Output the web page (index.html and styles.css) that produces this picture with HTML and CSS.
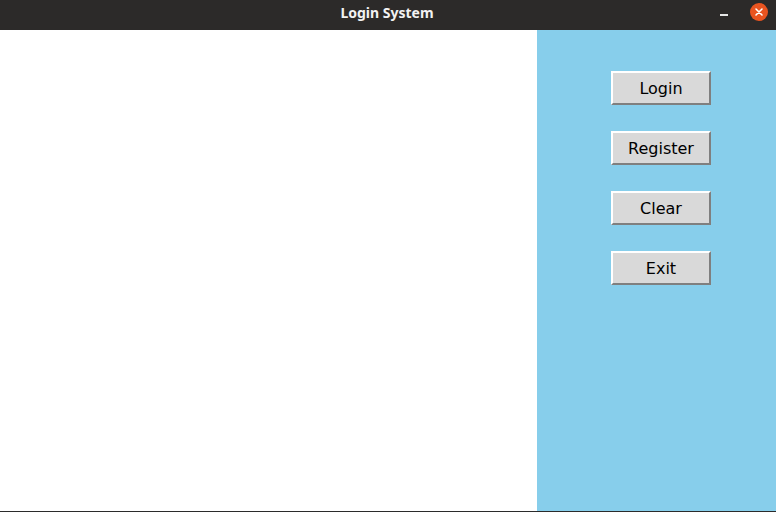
FILE: index.html
```html
<!DOCTYPE html>
<html>
<head>
<meta charset="utf-8">
<link rel="stylesheet" href="styles.css">
</head>
<body>
<div class="window">
  <div class="titlebar">
    <span class="title">Login System</span>
    <div class="controls">
      <span class="minimize"></span>
      <span class="close">
        <svg width="10" height="10" viewBox="0 0 10 10"><path d="M2 2 L8 8 M8 2 L2 8" stroke="#fff" stroke-width="1.6" stroke-linecap="round"/></svg>
      </span>
    </div>
  </div>
  <div class="content">
    <div class="main"></div>
    <div class="panel">
      <button class="btn">Login</button>
      <button class="btn">Register</button>
      <button class="btn">Clear</button>
      <button class="btn">Exit</button>
    </div>
  </div>
</div>
</body>
</html>
```
FILE: styles.css
```css
html, body {
  margin: 0;
  padding: 0;
  width: 776px;
  height: 512px;
  overflow: hidden;
}
.window {
  width: 776px;
  height: 512px;
  display: flex;
  flex-direction: column;
  background: #2b2b2b;
}
.titlebar {
  height: 30px;
  box-sizing: border-box;
  padding-bottom: 5px;
  flex: none;
  background: #2c2a29;
  position: relative;
  display: flex;
  align-items: center;
  justify-content: center;
}
.title {
  color: #f2f2f2;
  font-family: "Noto Sans", "DejaVu Sans", sans-serif;
  font-weight: bold;
  font-size: 14px;
  margin-left: -2px;
}
.controls {
  position: absolute;
  right: 8px;
  top: 3px;
  display: flex;
  align-items: center;
  gap: 22px;
}
.minimize {
  display: block;
  width: 8px;
  height: 1.5px;
  background: #e6e6e6;
  margin-top: 6px;
}
.close {
  width: 18px;
  height: 18px;
  border-radius: 50%;
  background: #e95420;
  display: flex;
  align-items: center;
  justify-content: center;
}
.content {
  flex: 1;
  display: flex;
  border-bottom: 1px solid #2b2b2b;
}
.main {
  width: 537px;
  background: #ffffff;
}
.panel {
  flex: 1;
  background: #87ceeb;
  display: flex;
  flex-direction: column;
  align-items: flex-start;
  padding: 41px 0 0 74px;
  gap: 26px;
}
.btn {
  width: 100px;
  height: 34px;
  box-sizing: border-box;
  background: #d9d9d9;
  border: 2px solid;
  border-color: #ffffff #7f7f7f #7f7f7f #ffffff;
  font-family: "DejaVu Sans", sans-serif;
  font-size: 16px;
  color: #000;
  padding: 0;
  margin: 0;
}
```
